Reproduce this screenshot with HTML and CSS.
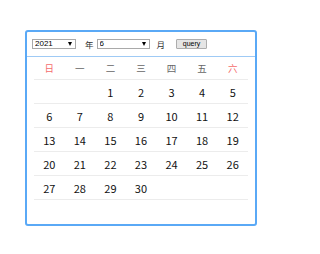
FILE: index.html
```html
<!DOCTYPE html>
<html lang="zh">
<head>
  <meta charset="UTF-8">
  <title>Calendar</title>
  <link rel="stylesheet" href="styles.css">
</head>
<body>

  <div class="calendar">
    <div class="cal-header">
      <span class="sel sel-year">
        <select id="year">
          <option>2021</option>
        </select>
      </span>
      <span class="lbl lbl-year">年</span>
      <span class="sel sel-month">
        <select id="month">
          <option>6</option>
        </select>
      </span>
      <span class="lbl lbl-month">月</span>
      <button class="query-btn">query</button>
    </div>

    <table class="cal-table">
      <thead>
        <tr>
          <th class="weekend">日</th>
          <th>一</th>
          <th>二</th>
          <th>三</th>
          <th>四</th>
          <th>五</th>
          <th class="weekend">六</th>
        </tr>
      </thead>
      <tbody>
        <tr><td></td><td></td><td>1</td><td>2</td><td>3</td><td>4</td><td>5</td></tr>
        <tr><td>6</td><td>7</td><td>8</td><td>9</td><td>10</td><td>11</td><td>12</td></tr>
        <tr><td>13</td><td>14</td><td>15</td><td>16</td><td>17</td><td>18</td><td>19</td></tr>
        <tr><td>20</td><td>21</td><td>22</td><td>23</td><td>24</td><td>25</td><td>26</td></tr>
        <tr><td>27</td><td>28</td><td>29</td><td>30</td><td></td><td></td><td></td></tr>
      </tbody>
    </table>
  </div>

</body>
</html>
```

FILE: styles.css
```css
body {
  margin: 0;
  background: #fff;
  font-family: "Noto Sans CJK SC", "Noto Sans", sans-serif;
}

.calendar {
  width: 232px;
  height: 196px;
  margin: 30px 0 0 25px;
  border: 2px solid #5aa9f6;
  border-radius: 3px;
  box-sizing: border-box;
}

.cal-header {
  height: 24px;
  padding: 0 5px;
  display: flex;
  align-items: center;
  border-bottom: 1px solid #9fcaf5;
}

.sel {
  position: relative;
  display: inline-block;
  height: 10px;
}

.sel select {
  appearance: none;
  -webkit-appearance: none;
  height: 10px;
  padding: 0 0 0 2px;
  border: 1px solid #a9a9a9;
  border-radius: 0;
  background: #fff;
  font-family: "Liberation Sans", Arial, sans-serif;
  font-size: 8px;
  line-height: 8px;
  color: #000;
  box-sizing: border-box;
  display: block;
}

.sel::after {
  content: "";
  position: absolute;
  right: 4px;
  top: 3px;
  border-left: 2px solid transparent;
  border-right: 2px solid transparent;
  border-top: 4px solid #000;
}

.sel-year select {
  width: 44px;
}

.sel-month select {
  width: 53px;
}

.lbl {
  font-size: 8.5px;
  color: #333;
  line-height: 10px;
}

.lbl-year {
  margin: 0 3px 0 9px;
}

.lbl-month {
  margin: 0 11px 0 7px;
}

.query-btn {
  width: 31px;
  height: 10px;
  padding: 0;
  border: 1px solid #adadad;
  border-radius: 1px;
  background: #e5e5e5;
  font-family: "Liberation Sans", Arial, sans-serif;
  font-size: 7px;
  line-height: 8px;
  color: #000;
}

.cal-table {
  width: 214px;
  margin: 0 7px;
  border-collapse: collapse;
  table-layout: fixed;
}

.cal-table th,
.cal-table td {
  padding: 0;
  text-align: center;
  border-bottom: 1px solid #ececec;
}

.cal-table th {
  height: 22px;
  font-size: 9.5px;
  font-weight: normal;
  color: #666;
}

.cal-table th.weekend {
  color: #f56c6c;
}

.cal-table td {
  height: 23px;
  font-size: 11px;
  color: #111;
}
```
